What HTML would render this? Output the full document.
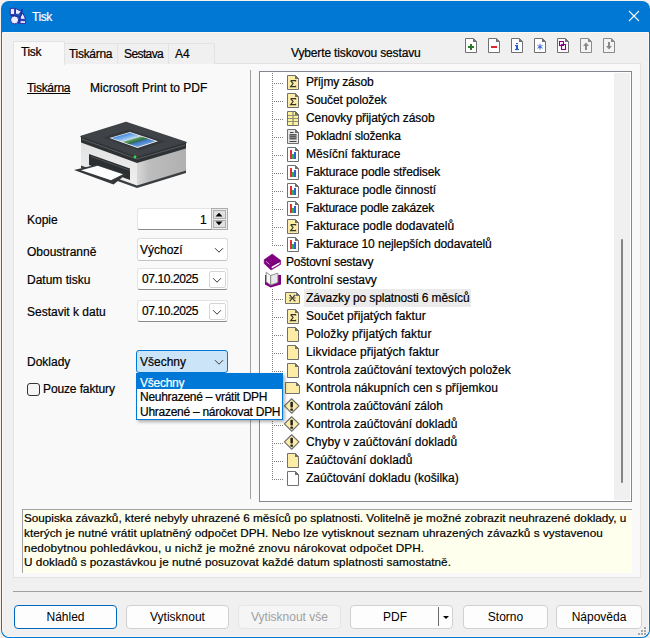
<!DOCTYPE html>
<html><head><meta charset="utf-8">
<style>
*{box-sizing:border-box;margin:0;padding:0}
html,body{width:650px;height:638px;overflow:hidden;background:#f6f1ec}
body{font-family:"Liberation Sans",sans-serif;font-size:12px;color:#000;position:relative}
.a{position:absolute}
.t{position:absolute;line-height:14px;white-space:nowrap;padding-top:1px;-webkit-text-stroke:0.2px currentColor}
#win{position:absolute;left:0;top:0;width:650px;height:638px}
#frame{position:absolute;left:1px;top:1px;width:649px;height:637px;border-radius:8px;background:#0078d4}
#client{position:absolute;left:2px;top:32px;width:647px;height:605px;background:#f0f0f0;border:1px solid #fdf7f1;border-radius:0 0 7px 7px}
.tab{position:absolute;top:43px;height:21px;background:#f0f0f0;border:1px solid #e3e3e3;border-bottom:none}
.panel{position:absolute;left:13px;top:63px;width:628px;height:515px;background:#f9f9f9;border:1px solid #e3e3e3}
.btn{position:absolute;top:605px;height:24px;background:#fdfdfd;border:1px solid #d0d0d0;border-radius:4px;text-align:center;line-height:22px}
.ti{position:absolute;left:0;width:16px;height:16px}
</style></head><body>
<div id="win">
 <div id="frame"></div>
 <!-- title -->
 <svg class="a" style="left:8px;top:6px" width="20" height="20" viewBox="0 0 20 20">
  <g stroke="#2323a0" stroke-width="0.9" fill="#e8eeff" stroke-linejoin="round">
  <path d="M2.3 2.4H6.6V8.6H2.3Z"/>
  <path d="M7.5 2.4L13.4 5.5L10.4 8.4L7.5 8.2Z"/>
  <circle cx="6.6" cy="13.9" r="4"/>
  <path d="M12 11.2L14.8 6.9L17.6 13.3H12Z"/>
  <path d="M12 14.7H17.6V17.4H12Z"/>
  </g>
  <path d="M2.5 9.2L11.8 10.3" stroke="#2323a0" stroke-width="1.1"/>
  <path d="M14.3 3.2L10.6 17.6" stroke="#2323a0" stroke-width="1.3"/>
 </svg>
 <div class="t" style="left:32px;top:9px;color:#fff;letter-spacing:-0.4px">Tisk</div>
 <svg class="a" style="left:628px;top:10px" width="12" height="12" viewBox="0 0 12 12"><path d="M1 1L11 11M11 1L1 11" stroke="#fff" stroke-width="1.1"/></svg>

 <div id="client"></div>

 <!-- tabs -->
 <div class="panel"></div>
 <div class="tab" style="left:64px;width:54px"></div>
 <div class="tab" style="left:117px;width:52px"></div>
 <div class="tab" style="left:168px;width:47px"></div>
 <div class="a" style="left:13px;top:41px;width:52px;height:24px;background:#f9f9f9;border:1px solid #e3e3e3;border-bottom:none"></div>
 <div class="t" style="left:21px;top:44px;letter-spacing:-0.35px">Tisk</div>
 <div class="t" style="left:69px;top:46px;letter-spacing:-0.3px">Tiskárna</div>
 <div class="t" style="left:124px;top:46px;letter-spacing:-0.6px">Sestava</div>
 <div class="t" style="left:175px;top:46px">A4</div>
 <div class="t" style="left:291px;top:45px;letter-spacing:-0.14px">Vyberte tiskovou sestavu</div>

 <!-- toolbar icons -->
 <!--TB--><svg class="a" style="left:0;top:0" width="650" height="60"><g transform="translate(465,38)"><path d="M0.5 0.5H8.5L11.5 3.5V14.5H0.5Z" fill="#fff" stroke="#707070"/><path d="M8 0L12 4H8Z" fill="#707070"/><path d="M3 9H9M6 6V12" stroke="#2b7a2b" stroke-width="2"/></g><g transform="translate(488,38)"><path d="M0.5 0.5H8.5L11.5 3.5V14.5H0.5Z" fill="#fff" stroke="#707070"/><path d="M8 0L12 4H8Z" fill="#707070"/><path d="M3 9H9" stroke="#e02828" stroke-width="2"/></g><g transform="translate(511,38)"><path d="M0.5 0.5H8.5L11.5 3.5V14.5H0.5Z" fill="#fff" stroke="#707070"/><path d="M8 0L12 4H8Z" fill="#707070"/><g fill="#1f5fd0"><rect x="5" y="5" width="2" height="1.1"/><rect x="4" y="7" width="3" height="1.1"/><rect x="5" y="7" width="2" height="5"/><rect x="4" y="10.9" width="4" height="1.2"/></g></g><g transform="translate(534,38)"><path d="M0.5 0.5H8.5L11.5 3.5V14.5H0.5Z" fill="#fff" stroke="#707070"/><path d="M8 0L12 4H8Z" fill="#707070"/><path d="M6 5.8V11.8M3.4 7.3L8.6 10.3M8.6 7.3L3.4 10.3" stroke="#3f6fd0" stroke-width="1"/><rect x="5" y="7.8" width="2" height="2" fill="#3f6fd0"/></g><g transform="translate(557,38)"><path d="M0.5 0.5H8.5L11.5 3.5V14.5H0.5Z" fill="#fff" stroke="#707070"/><path d="M8 0L12 4H8Z" fill="#707070"/><rect x="2.5" y="3.5" width="4" height="4" fill="none" stroke="#8b008b" stroke-width="1.1"/><rect x="4.5" y="6.5" width="4" height="5" fill="none" stroke="#8b008b" stroke-width="1.1"/></g><g transform="translate(580,38)"><path d="M0.5 0.5H8.5L11.5 3.5V14.5H0.5Z" fill="#f4f4f4" stroke="#8a8a8a"/><path d="M8 0L12 4H8Z" fill="#8a8a8a"/><path d="M3 8L6 4.5L9 8Z" fill="#8a8a8a"/><rect x="5" y="8" width="2" height="4" fill="#8a8a8a"/></g><g transform="translate(603,38)"><path d="M0.5 0.5H8.5L11.5 3.5V14.5H0.5Z" fill="#f4f4f4" stroke="#8a8a8a"/><path d="M8 0L12 4H8Z" fill="#8a8a8a"/><path d="M3 8L6 11.5L9 8Z" fill="#8a8a8a"/><rect x="5" y="4" width="2" height="4" fill="#8a8a8a"/></g></svg><!--/TB-->

 <!-- left panel -->
 <div class="t" style="left:27px;top:80px;letter-spacing:-0.3px">Tiskárna</div><div class="a" style="left:27px;top:93px;width:43px;height:1px;background:#000"></div>
 <div class="t" style="left:90px;top:80px">Microsoft Print to PDF</div>
 <svg class="a" style="left:60px;top:110px" width="140" height="85" viewBox="60 110 140 85">
  <defs>
   <linearGradient id="gf" x1="0" y1="0" x2="0" y2="1"><stop offset="0" stop-color="#e2e2e2"/><stop offset="1" stop-color="#f0f0f0"/></linearGradient>
   <linearGradient id="gr" x1="0" y1="0" x2="1" y2="0"><stop offset="0" stop-color="#d8d8d8"/><stop offset=".25" stop-color="#bdbdbd"/><stop offset="1" stop-color="#b0b0b0"/></linearGradient>
   <linearGradient id="gp" gradientUnits="userSpaceOnUse" x1="120" y1="135.2" x2="124.6" y2="150.5"><stop offset="0" stop-color="#3f86e0"/><stop offset=".3" stop-color="#8fbcec"/><stop offset=".42" stop-color="#c6dcee"/><stop offset=".5" stop-color="#5c9a60"/><stop offset=".68" stop-color="#2e6a45"/><stop offset=".75" stop-color="#3f79c4"/><stop offset="1" stop-color="#6a9ad6"/></linearGradient>
  </defs>
  <path d="M81 142L137 161.5V186L81 166Z" fill="url(#gf)"/>
  <path d="M137 161.5L186 148V171L137 186Z" fill="url(#gr)"/>
  <path d="M81 165.5L137 185.5L186 170.5V173L137 188L81 168Z" fill="#3b3e41"/>
  <path d="M81 136.5L126 122.5L186 142.5L137 157Z" fill="#3f4246" stroke="#3f4246" stroke-width="1.5" stroke-linejoin="round"/>
  <path d="M81 136.5L137 157L186 142.5V148.5L137 163L81 142.5Z" fill="#2f3235"/>
  <path d="M82 139L137 159L185 145" fill="none" stroke="#6b6e71" stroke-width=".7"/>
  <path d="M103 137.5L129 129.5L165 141.5L139 150.5Z" fill="#35383b"/>
  <path d="M109.5 138L130 132L158 141.2L137.5 148Z" fill="#f4f4f4"/>
  <path d="M111.5 138.1L130 132.8L155.5 141.2L137.5 147Z" fill="url(#gp)"/>
  <circle cx="135" cy="157" r="1.4" fill="#2fe04a"/>
  <path d="M89 154L130 168.5V180L89 165Z" fill="#2c2f32"/>
  <path d="M91 156.5L130 170.5" stroke="#55585b" stroke-width=".8"/>
  <path d="M74 170L97 164.5L126 174.5L113.5 184.5Z" fill="#35383b"/>
  <path d="M81 170.3L97.6 165.8L123 174.3L111 180.3Z" fill="#fdfdfd"/>
 </svg>

 <div class="t" style="left:27px;top:212px">Kopie</div>
 <div class="t" style="left:27px;top:244px">Oboustranně</div>
 <div class="t" style="left:27px;top:272px">Datum tisku</div>
 <div class="t" style="left:27px;top:304px">Sestavit k datu</div>
 <div class="t" style="left:27px;top:354px">Doklady</div>
 <div class="a" style="left:27px;top:383px;width:13px;height:13px;border:1px solid #333;border-radius:3px;background:#f5f5f5"></div>
 <div class="t" style="left:43px;top:381px;letter-spacing:-0.12px">Pouze faktury</div>

 <!-- spinner -->
 <div class="a" style="left:137px;top:208px;width:75px;height:22px;background:#fff;border:1px solid #e5e5e5;border-bottom:1px solid #8a8a8a;border-radius:3px 0 0 3px"></div>
 <div class="t" style="left:200px;top:212px">1</div>
 <div class="a" style="left:211px;top:208px;width:17px;height:22px;background:#ececec;border:1px solid #adadad"></div>
 <div class="a" style="left:213px;top:210px;width:13px;height:9px;background:#e1e1e1;border:1px solid #adadad"></div>
 <div class="a" style="left:213px;top:220px;width:13px;height:8px;background:#e1e1e1;border:1px solid #adadad"></div>
 <svg class="a" style="left:212px;top:210px" width="14" height="18" viewBox="212 210 14 18"><path d="M215.5 216.5H222.5L219 212.8z" fill="#000"/><path d="M215.5 221.5H222.5L219 225.2z" fill="#000"/></svg>

 <!-- combo Výchozí -->
 <div class="a" style="left:137px;top:238px;width:91px;height:23px;background:#fff;border:1px solid #dcdcdc;border-bottom-color:#c4c4c4;border-radius:3px"></div>
 <div class="t" style="left:140px;top:242px">Výchozí</div>
 <svg class="a" style="left:214px;top:247px" width="10" height="7" viewBox="0 0 10 7"><path d="M1 1.2L5 5.2 9 1.2" fill="none" stroke="#3a3a3a" stroke-width="1"/></svg>

 <!-- date 1 -->
 <div class="a" style="left:137px;top:268px;width:91px;height:22px;background:#fff;border:1px solid #e3e3e3;border-bottom:1px solid #8a8a8a;border-radius:3px"></div>
 <div class="t" style="left:142px;top:271px;letter-spacing:-0.4px">07.10.2025</div>
 <div class="a" style="left:209px;top:271px;width:17px;height:17px;background:#fff;border:1px solid #d5d5d5;border-radius:2px"></div>
 <svg class="a" style="left:212px;top:277px" width="10" height="7" viewBox="0 0 10 7"><path d="M1 1.2L5 5.2 9 1.2" fill="none" stroke="#3a3a3a" stroke-width="1"/></svg>
 <!-- date 2 -->
 <div class="a" style="left:137px;top:300px;width:91px;height:22px;background:#fff;border:1px solid #e3e3e3;border-bottom:1px solid #8a8a8a;border-radius:3px"></div>
 <div class="t" style="left:142px;top:303px;letter-spacing:-0.4px">07.10.2025</div>
 <div class="a" style="left:209px;top:303px;width:17px;height:17px;background:#fff;border:1px solid #d5d5d5;border-radius:2px"></div>
 <svg class="a" style="left:212px;top:309px" width="10" height="7" viewBox="0 0 10 7"><path d="M1 1.2L5 5.2 9 1.2" fill="none" stroke="#3a3a3a" stroke-width="1"/></svg>

 <!-- vertical divider -->
 <div class="a" style="left:250px;top:70px;width:1px;height:429px;background:#a0a0a0"></div>

 <!-- tree -->
 <div id="tree" class="a" style="left:259px;top:71px;width:373px;height:431px;background:#fff;border:1px solid #828790;overflow:hidden"></div><!--TREE--><div class="t" style="left:306px;top:74px;letter-spacing:-0.155px">Příjmy zásob</div><div class="t" style="left:306px;top:92px;letter-spacing:-0.100px">Součet položek</div><div class="t" style="left:306px;top:110px;letter-spacing:-0.068px">Cenovky přijatých zásob</div><div class="t" style="left:306px;top:128px;letter-spacing:-0.156px">Pokladní složenka</div><div class="t" style="left:306px;top:146px;letter-spacing:-0.013px">Měsíční fakturace</div><div class="t" style="left:306px;top:164px;letter-spacing:-0.133px">Fakturace podle středisek</div><div class="t" style="left:306px;top:182px;letter-spacing:-0.030px">Fakturace podle činností</div><div class="t" style="left:306px;top:200px;letter-spacing:-0.236px">Fakturace podle zakázek</div><div class="t" style="left:306px;top:218px;letter-spacing:0.000px">Fakturace podle dodavatelů</div><div class="t" style="left:306px;top:236px;letter-spacing:-0.115px">Fakturace 10 nejlepších dodavatelů</div><div class="t" style="left:286px;top:254px;letter-spacing:-0.213px">Poštovní sestavy</div><div class="t" style="left:286px;top:272px;letter-spacing:-0.075px">Kontrolní sestavy</div><div class="a" style="left:304px;top:289px;width:167px;height:18px;background:#ebebeb"></div><div class="t" style="left:306px;top:290px;letter-spacing:-0.130px">Závazky po splatnosti 6 měsíců</div><div class="t" style="left:306px;top:308px;letter-spacing:0.041px">Součet přijatých faktur</div><div class="t" style="left:306px;top:326px;letter-spacing:0.087px">Položky přijatých faktur</div><div class="t" style="left:306px;top:344px;letter-spacing:0.068px">Likvidace přijatých faktur</div><div class="t" style="left:306px;top:362px;letter-spacing:0.000px">Kontrola zaúčtování textových položek</div><div class="t" style="left:306px;top:380px;letter-spacing:0.015px">Kontrola nákupních cen s příjemkou</div><div class="t" style="left:306px;top:398px;letter-spacing:-0.050px">Kontrola zaúčtování záloh</div><div class="t" style="left:306px;top:416px;letter-spacing:0.000px">Kontrola zaúčtování dokladů</div><div class="t" style="left:306px;top:434px;letter-spacing:0.040px">Chyby v zaúčtování dokladů</div><div class="t" style="left:306px;top:452px;letter-spacing:0.100px">Zaúčtování dokladů</div><div class="t" style="left:306px;top:470px;letter-spacing:0.000px">Zaúčtování dokladu (košilka)</div><svg class="a" style="left:0;top:0" width="650" height="638"><path d="M272.5 73V246M272.5 289V480" stroke="#808080" stroke-dasharray="1 1" fill="none"/><path d="M272 83.5H283" stroke="#808080" stroke-dasharray="1 1" fill="none"/><g transform="translate(287,75)"><path d="M0.5 0.5H8.5L11.5 3.5V14.5H0.5Z" fill="#fdeca6" stroke="#707070"/><path d="M8 0L12 4H8Z" fill="#707070"/><path d="M3.6 5.6H8.6V6.5M3.6 5.6L6.1 8.6L3.6 11.6H8.6V10.7" fill="none" stroke="#333" stroke-width="1.15"/></g><path d="M272 101.5H283" stroke="#808080" stroke-dasharray="1 1" fill="none"/><g transform="translate(287,93)"><path d="M0.5 0.5H8.5L11.5 3.5V14.5H0.5Z" fill="#fdeca6" stroke="#707070"/><path d="M8 0L12 4H8Z" fill="#707070"/><path d="M3.6 5.6H8.6V6.5M3.6 5.6L6.1 8.6L3.6 11.6H8.6V10.7" fill="none" stroke="#333" stroke-width="1.15"/></g><path d="M272 119.5H283" stroke="#808080" stroke-dasharray="1 1" fill="none"/><g transform="translate(287,111)"><path d="M0.5 0.5H8.5L11.5 3.5V14.5H0.5Z" fill="#fff39a" stroke="#707070"/><path d="M8 0L12 4H8Z" fill="#707070"/><path d="M1 4.5H11M1 7.5H11M1 10.5H11" stroke="#8f8f78" stroke-width="1.1"/><path d="M6 1V14" stroke="#8f8f78" stroke-width="1.3"/></g><path d="M272 137.5H283" stroke="#808080" stroke-dasharray="1 1" fill="none"/><g transform="translate(287,129)"><path d="M0.5 0.5H8.5L11.5 3.5V14.5H0.5Z" fill="#e6e6e6" stroke="#707070"/><path d="M8 0L12 4H8Z" fill="#707070"/><path d="M3 3.5H6.5M2.5 12.5H9.5" stroke="#444" stroke-width="1"/><rect x="2.5" y="5" width="7" height="5.5" fill="#5a5a5a"/><path d="M2.5 6.5H9.5M2.5 8.5H9.5" stroke="#9a9a9a" stroke-width=".7"/></g><path d="M272 155.5H283" stroke="#808080" stroke-dasharray="1 1" fill="none"/><g transform="translate(287,147)"><path d="M0.5 0.5H8.5L11.5 3.5V14.5H0.5Z" fill="#fff" stroke="#707070"/><path d="M8 0L12 4H8Z" fill="#707070"/><rect x="3" y="3" width="2" height="9" fill="#e03030"/><rect x="5" y="7" width="2" height="5" fill="#30b040"/><rect x="7" y="5" width="2" height="7" fill="#2f5fd8"/></g><path d="M272 173.5H283" stroke="#808080" stroke-dasharray="1 1" fill="none"/><g transform="translate(287,165)"><path d="M0.5 0.5H8.5L11.5 3.5V14.5H0.5Z" fill="#fff" stroke="#707070"/><path d="M8 0L12 4H8Z" fill="#707070"/><rect x="3" y="3" width="2" height="9" fill="#e03030"/><rect x="5" y="7" width="2" height="5" fill="#30b040"/><rect x="7" y="5" width="2" height="7" fill="#2f5fd8"/></g><path d="M272 191.5H283" stroke="#808080" stroke-dasharray="1 1" fill="none"/><g transform="translate(287,183)"><path d="M0.5 0.5H8.5L11.5 3.5V14.5H0.5Z" fill="#fff" stroke="#707070"/><path d="M8 0L12 4H8Z" fill="#707070"/><rect x="3" y="3" width="2" height="9" fill="#e03030"/><rect x="5" y="7" width="2" height="5" fill="#30b040"/><rect x="7" y="5" width="2" height="7" fill="#2f5fd8"/></g><path d="M272 209.5H283" stroke="#808080" stroke-dasharray="1 1" fill="none"/><g transform="translate(287,201)"><path d="M0.5 0.5H8.5L11.5 3.5V14.5H0.5Z" fill="#fff" stroke="#707070"/><path d="M8 0L12 4H8Z" fill="#707070"/><rect x="3" y="3" width="2" height="9" fill="#e03030"/><rect x="5" y="7" width="2" height="5" fill="#30b040"/><rect x="7" y="5" width="2" height="7" fill="#2f5fd8"/></g><path d="M272 227.5H283" stroke="#808080" stroke-dasharray="1 1" fill="none"/><g transform="translate(287,219)"><path d="M0.5 0.5H8.5L11.5 3.5V14.5H0.5Z" fill="#fdeca6" stroke="#707070"/><path d="M8 0L12 4H8Z" fill="#707070"/><path d="M3.6 5.6H8.6V6.5M3.6 5.6L6.1 8.6L3.6 11.6H8.6V10.7" fill="none" stroke="#333" stroke-width="1.15"/></g><path d="M272 245.5H283" stroke="#808080" stroke-dasharray="1 1" fill="none"/><g transform="translate(287,237)"><path d="M0.5 0.5H8.5L11.5 3.5V14.5H0.5Z" fill="#fff" stroke="#707070"/><path d="M8 0L12 4H8Z" fill="#707070"/><rect x="3" y="3" width="2" height="9" fill="#e03030"/><rect x="5" y="7" width="2" height="5" fill="#30b040"/><rect x="7" y="5" width="2" height="7" fill="#2f5fd8"/></g><g transform="translate(260,252)"><path d="M4.2 7.7L12.2 2.1L20.5 8.3V12.4L11 18L4.2 11.6Z" fill="#800080" stroke="#800080" stroke-width=".6" stroke-linejoin="round"/><path d="M11.6 14.8L19.6 10.2V12L11.8 16.6Z" fill="#fff"/><path d="M4.2 7.7L10.7 14L20.5 8.3" fill="none" stroke="#5e005e" stroke-width=".6"/><path d="M5.8 9.2L9.6 12.4" stroke="#d9a0d9" stroke-width=".9"/></g><g transform="translate(260,252)"><path d="M5 21.5V32.6L10.6 35.4L21 32.6V23H5Z" fill="#800080"/><path d="M6.2 20.2L10.7 23.5V33L6.2 29.8Z" fill="#f6f6f6" stroke="#8a8a8a" stroke-width=".9" stroke-linejoin="round"/><path d="M10.7 23.5L17.9 21.1V30.4L10.7 33Z" fill="#e9e9e9" stroke="#8a8a8a" stroke-width=".9" stroke-linejoin="round"/><path d="M6.4 23.2V30L10.6 33.1L17.9 30.5V23.3" fill="none" stroke="#800080" stroke-width="0" /></g><path d="M272 299.5H283" stroke="#808080" stroke-dasharray="1 1" fill="none"/><g transform="translate(285,292)"><path d="M0.5 0.5H11.5L14.5 3.5V11.5H0.5Z" fill="#fdeca6" stroke="#707070"/><path d="M11 0L15 4H11Z" fill="#707070"/><path d="M4 6H10.8" stroke="#9a9470" stroke-width="1.6"/><path d="M4.3 3.3H6M8.8 3.3H10.5M4.3 8.8H6M8.8 8.8H10.5" stroke="#3a3a3a" stroke-width="1"/><path d="M5 3.3L9.8 8.8M9.8 3.3L5 8.8" stroke="#3a3a3a" stroke-width="1.05"/></g><path d="M272 317.5H283" stroke="#808080" stroke-dasharray="1 1" fill="none"/><g transform="translate(287,309)"><path d="M0.5 0.5H8.5L11.5 3.5V14.5H0.5Z" fill="#fdeca6" stroke="#707070"/><path d="M8 0L12 4H8Z" fill="#707070"/><path d="M3.6 5.6H8.6V6.5M3.6 5.6L6.1 8.6L3.6 11.6H8.6V10.7" fill="none" stroke="#333" stroke-width="1.15"/></g><path d="M272 335.5H283" stroke="#808080" stroke-dasharray="1 1" fill="none"/><g transform="translate(287,327)"><path d="M0.5 0.5H8.5L11.5 3.5V14.5H0.5Z" fill="#fdeca6" stroke="#707070"/><path d="M8 0L12 4H8Z" fill="#707070"/></g><path d="M272 353.5H283" stroke="#808080" stroke-dasharray="1 1" fill="none"/><g transform="translate(287,345)"><path d="M0.5 0.5H8.5L11.5 3.5V14.5H0.5Z" fill="#fdeca6" stroke="#707070"/><path d="M8 0L12 4H8Z" fill="#707070"/></g><path d="M272 371.5H283" stroke="#808080" stroke-dasharray="1 1" fill="none"/><g transform="translate(287,363)"><path d="M0.5 0.5H8.5L11.5 3.5V14.5H0.5Z" fill="#fdeca6" stroke="#707070"/><path d="M8 0L12 4H8Z" fill="#707070"/></g><path d="M272 389.5H283" stroke="#808080" stroke-dasharray="1 1" fill="none"/><g transform="translate(285,382)"><path d="M0.5 0.5H11.5L14.5 3.5V11.5H0.5Z" fill="#fdeca6" stroke="#707070"/><path d="M11 0L15 4H11Z" fill="#707070"/></g><path d="M272 407.5H283" stroke="#808080" stroke-dasharray="1 1" fill="none"/><g transform="translate(284,398)"><path d="M7.6 0.8L15 7.9L7.6 15.2L0.4 7.9Z" fill="#fdeca6" stroke="#707070" stroke-width="1.2" stroke-linejoin="round"/><rect x="6.4" y="3.8" width="2.5" height="5.6" rx=".6" fill="#222"/><rect x="6.4" y="10.4" width="2.5" height="2.3" rx=".5" fill="#222"/></g><path d="M272 425.5H283" stroke="#808080" stroke-dasharray="1 1" fill="none"/><g transform="translate(284,416)"><path d="M7.6 0.8L15 7.9L7.6 15.2L0.4 7.9Z" fill="#fdeca6" stroke="#707070" stroke-width="1.2" stroke-linejoin="round"/><rect x="6.4" y="3.8" width="2.5" height="5.6" rx=".6" fill="#222"/><rect x="6.4" y="10.4" width="2.5" height="2.3" rx=".5" fill="#222"/></g><path d="M272 443.5H283" stroke="#808080" stroke-dasharray="1 1" fill="none"/><g transform="translate(284,434)"><path d="M7.6 0.8L15 7.9L7.6 15.2L0.4 7.9Z" fill="#fdeca6" stroke="#707070" stroke-width="1.2" stroke-linejoin="round"/><rect x="6.4" y="3.8" width="2.5" height="5.6" rx=".6" fill="#222"/><rect x="6.4" y="10.4" width="2.5" height="2.3" rx=".5" fill="#222"/></g><path d="M272 461.5H283" stroke="#808080" stroke-dasharray="1 1" fill="none"/><g transform="translate(287,453)"><path d="M0.5 0.5H8.5L11.5 3.5V14.5H0.5Z" fill="#fdeca6" stroke="#707070"/><path d="M8 0L12 4H8Z" fill="#707070"/></g><path d="M272 479.5H283" stroke="#808080" stroke-dasharray="1 1" fill="none"/><g transform="translate(287,471)"><path d="M0.5 0.5H8.5L11.5 3.5V14.5H0.5Z" fill="#fff" stroke="#707070"/><path d="M8 0L12 4H8Z" fill="#707070"/></g></svg><div class="a" style="left:614px;top:73px;width:16px;height:427px;background:#f0f0f0"></div><div class="a" style="left:621px;top:239px;width:2px;height:244px;background:#858585;border-radius:1px"></div><!--/TREE-->

 <!-- combo Doklady (open) -->
 <div class="a" style="left:136px;top:350px;width:92px;height:23px;background:#cce4f7;border:1px solid #0078d7;border-radius:3px"></div>
 <div class="t" style="left:140px;top:354px">Všechny</div>
 <svg class="a" style="left:214px;top:359px" width="10" height="7" viewBox="0 0 10 7"><path d="M1 1.2L5 5.2 9 1.2" fill="none" stroke="#3a3a3a" stroke-width="1"/></svg>
 <div class="a" style="left:136px;top:373px;width:147px;height:47px;background:#fff;border:1px solid #0078d7;box-shadow:2px 2px 3px rgba(0,0,0,.3)"></div>
 <div class="a" style="left:137px;top:374px;width:145px;height:15px;background:#0078d7"></div>
 <div class="t" style="left:140px;top:375px;color:#fff;letter-spacing:-0.25px">Všechny</div>
 <div class="t" style="left:140px;top:389px;letter-spacing:-0.27px">Neuhrazené – vrátit DPH</div>
 <div class="t" style="left:140px;top:404px;letter-spacing:-0.27px">Uhrazené – nárokovat DPH</div>

 <!-- info -->
 <div class="a" style="left:22px;top:509px;width:610px;height:64px;background:#ffffee;border-left:1px solid #a0a0a0;border-top:1px solid #a0a0a0"></div>
 <div class="t" style="left:24px;top:510px;font-size:11.75px;letter-spacing:-0.02px">Soupiska závazků, které nebyly uhrazené 6 měsíců po splatnosti. Volitelně je možné zobrazit neuhrazené doklady, u</div><div class="t" style="left:24px;top:525px;font-size:11.75px;letter-spacing:0.045px">kterých je nutné vrátit uplatněný odpočet DPH. Nebo lze vytisknout seznam uhrazených závazků s vystavenou</div><div class="t" style="left:24px;top:540px;font-size:11.75px;letter-spacing:0.12px">nedobytnou pohledávkou, u nichž je možné znovu nárokovat odpočet DPH.</div><div class="t" style="left:24px;top:554px;font-size:11.75px;letter-spacing:0.04px">U dokladů s pozastávkou je nutné posuzovat každé datum splatnosti samostatně.</div>

 <!-- separator -->
 <div class="a" style="left:13px;top:591px;width:629px;height:1px;background:#a0a0a0"></div>

 <!-- buttons -->
 <div class="btn" style="left:14px;width:103px;border-color:#0067c0">Náhled</div>
 <div class="btn" style="left:126px;width:103px">Vytisknout</div>
 <div class="btn" style="left:238px;width:103px;color:#a0a0a0;background:#f5f5f5;border-color:#e5e5e5">Vytisknout vše</div>
 <div class="btn" style="left:350px;width:103px;text-align:left;padding-left:32px">PDF</div>
 <div class="a" style="left:438px;top:607px;width:1px;height:19px;background:#6a6a6a"></div>
 <svg class="a" style="left:443px;top:616px" width="6" height="4" viewBox="0 0 6 4"><path d="M0 0H6L3 3z" fill="#000"/></svg>
 <div class="btn" style="left:463px;width:85px">Storno</div>
 <div class="btn" style="left:556px;width:86px">Nápověda</div>
<svg class="a" style="left:637px;top:626px" width="10" height="10"><g fill="#a8a8a8"><rect x="7" y="1" width="2" height="2"/><rect x="4" y="4" width="2" height="2"/><rect x="7" y="4" width="2" height="2"/><rect x="1" y="7" width="2" height="2"/><rect x="4" y="7" width="2" height="2"/><rect x="7" y="7" width="2" height="2"/></g></svg>
</div>
</body></html>
